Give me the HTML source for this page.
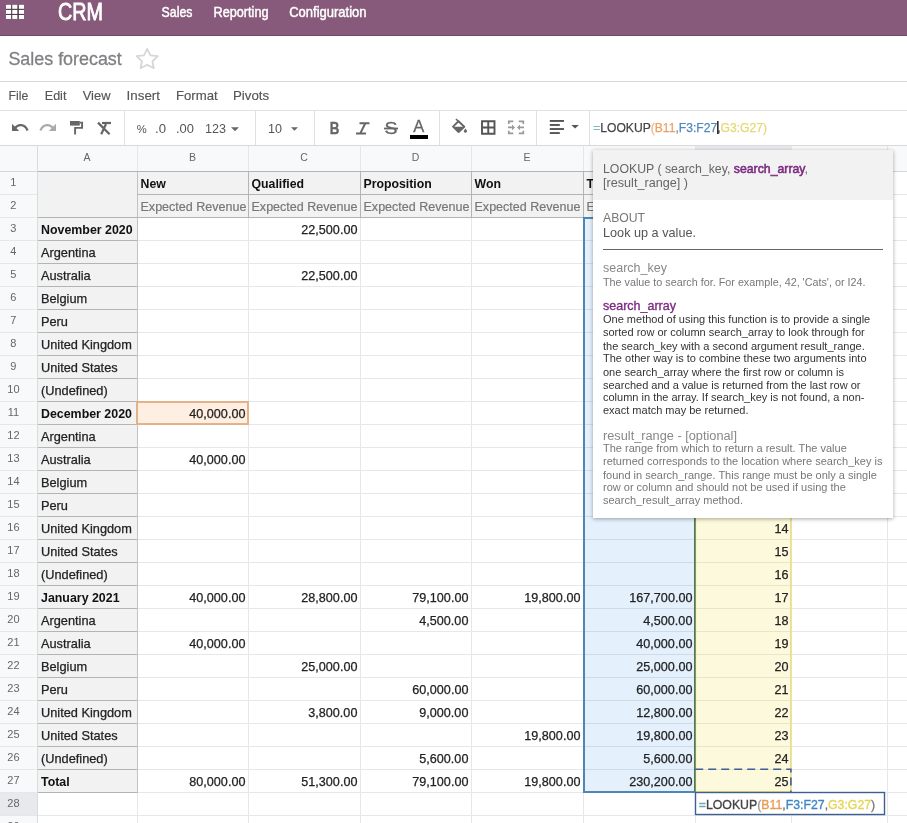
<!DOCTYPE html>
<html><head><meta charset="utf-8"><style>
html,body{margin:0;padding:0;background:#fff;}
body{width:907px;height:823px;overflow:hidden;position:relative;font-family:"Liberation Sans", sans-serif;}
svg{position:absolute;left:0;top:0;font-family:"Liberation Sans", sans-serif;will-change:transform;}
</style></head><body>
<svg width="907" height="823" viewBox="0 0 907 823">
<rect x="0" y="0" width="907" height="35" fill="#875A7B" />
<rect x="0" y="35" width="907" height="1" fill="#6f4a66" />
<rect x="6" y="4.8" width="18" height="14.1" fill="#4b3446" />
<rect x="6" y="4.8" width="5.15" height="4.0" fill="#ffffff" />
<rect x="12.25" y="4.8" width="5.15" height="4.0" fill="#ffffff" />
<rect x="18.85" y="4.8" width="5.15" height="4.0" fill="#ffffff" />
<rect x="6" y="9.9" width="5.15" height="4.0" fill="#ffffff" />
<rect x="12.25" y="9.9" width="5.15" height="4.0" fill="#ffffff" />
<rect x="18.85" y="9.9" width="5.15" height="4.0" fill="#ffffff" />
<rect x="6" y="14.95" width="5.15" height="4.0" fill="#ffffff" />
<rect x="12.25" y="14.95" width="5.15" height="4.0" fill="#ffffff" />
<rect x="18.85" y="14.95" width="5.15" height="4.0" fill="#ffffff" />
<text x="57.9" y="20.2" font-size="23.5" fill="#fff" font-weight="normal" text-anchor="start" textLength="45" lengthAdjust="spacingAndGlyphs" stroke="#fff" stroke-width="0.8">CRM</text>
<text x="161.6" y="17.2" font-size="14.2" fill="#fff" font-weight="normal" text-anchor="start" textLength="30.8" lengthAdjust="spacingAndGlyphs" stroke="#fff" stroke-width="0.45">Sales</text>
<text x="213.6" y="17.2" font-size="14.2" fill="#fff" font-weight="normal" text-anchor="start" textLength="54.9" lengthAdjust="spacingAndGlyphs" stroke="#fff" stroke-width="0.45">Reporting</text>
<text x="289.2" y="17.2" font-size="14.2" fill="#fff" font-weight="normal" text-anchor="start" textLength="77.4" lengthAdjust="spacingAndGlyphs" stroke="#fff" stroke-width="0.45">Configuration</text>
<text x="8.4" y="64.7" font-size="18.5" fill="#808084" font-weight="normal" text-anchor="start" textLength="113.4" lengthAdjust="spacingAndGlyphs"  stroke="#808084" stroke-width="0.3">Sales forecast</text>
<path d="M147.2 48.8 L150.4 55.4 L157.8 56.2 L152.4 61.3 L153.8 68.2 L147.2 64.7 L140.6 68.2 L142 61.3 L136.6 56.2 L144 55.4 Z" fill="none" stroke="#d6d6d6" stroke-width="1.8" stroke-linejoin="round"/>
<rect x="0" y="81" width="907" height="1" fill="#d8d8d8" />
<text x="8.6" y="100" font-size="12.8" fill="#555" font-weight="normal" text-anchor="start" textLength="19.8" lengthAdjust="spacingAndGlyphs"  stroke="#555" stroke-width="0.15">File</text>
<text x="44.8" y="100" font-size="12.8" fill="#555" font-weight="normal" text-anchor="start" textLength="21.6" lengthAdjust="spacingAndGlyphs"  stroke="#555" stroke-width="0.15">Edit</text>
<text x="82.7" y="100" font-size="12.8" fill="#555" font-weight="normal" text-anchor="start" textLength="27.8" lengthAdjust="spacingAndGlyphs"  stroke="#555" stroke-width="0.15">View</text>
<text x="126.6" y="100" font-size="12.8" fill="#555" font-weight="normal" text-anchor="start" textLength="33.4" lengthAdjust="spacingAndGlyphs"  stroke="#555" stroke-width="0.15">Insert</text>
<text x="176" y="100" font-size="12.8" fill="#555" font-weight="normal" text-anchor="start" textLength="41.7" lengthAdjust="spacingAndGlyphs"  stroke="#555" stroke-width="0.15">Format</text>
<text x="233" y="100" font-size="12.8" fill="#555" font-weight="normal" text-anchor="start" textLength="36.2" lengthAdjust="spacingAndGlyphs"  stroke="#555" stroke-width="0.15">Pivots</text>
<rect x="0" y="110" width="907" height="1" fill="#e0e0e0" />
<path d="M14.5 129.2 C17.5 123.8 24.5 123.6 27.6 130.4" fill="none" stroke="#666" stroke-width="2.3"/>
<path d="M12 123.8 L12 130.9 L19.2 130.9 Z" fill="#666"/>
<path d="M53.5 129.2 C50.5 123.8 43.5 123.6 40.4 130.4" fill="none" stroke="#aaa" stroke-width="2.3"/>
<path d="M56 123.8 L56 130.9 L48.8 130.9 Z" fill="#aaa"/>
<path d="M70 121 h9.8 v4.6 h-9.8 z" fill="#666"/>
<path d="M79.8 122.6 h2.3 v5.3 h-7 v6.6" fill="none" stroke="#666" stroke-width="1.9"/>
<path d="M102 123 h9" stroke="#666" stroke-width="2.2" fill="none"/>
<path d="M106 124 L101.2 134.2 M98 122.6 L109.6 134.2" stroke="#666" stroke-width="2.2" fill="none"/>
<rect x="124" y="111" width="1" height="34" fill="#e0e0e0" />
<text x="136.8" y="132.8" font-size="11.2" fill="#555" font-weight="normal" text-anchor="start" >%</text>
<text x="155" y="132.9" font-size="12.5" fill="#555" font-weight="normal" text-anchor="start" textLength="11" lengthAdjust="spacingAndGlyphs" >.0</text>
<text x="176" y="132.9" font-size="12.5" fill="#555" font-weight="normal" text-anchor="start" textLength="18" lengthAdjust="spacingAndGlyphs" >.00</text>
<text x="205" y="132.6" font-size="12.8" fill="#555" font-weight="normal" text-anchor="start" textLength="21" lengthAdjust="spacingAndGlyphs" >123</text>
<path d="M231 127.3 h8 l-4 4 z" fill="#666"/>
<rect x="255" y="111" width="1" height="34" fill="#e0e0e0" />
<text x="268" y="132.6" font-size="12.8" fill="#555" font-weight="normal" text-anchor="start" textLength="14" lengthAdjust="spacingAndGlyphs" >10</text>
<path d="M291 127.3 h7 l-3.5 3.5 z" fill="#666"/>
<rect x="314" y="111" width="1" height="34" fill="#e0e0e0" />
<text x="329.8" y="134" font-size="16.5" fill="#666" font-weight="bold" text-anchor="start" textLength="9.6" lengthAdjust="spacingAndGlyphs"  stroke="#666" stroke-width="0.4">B</text>
<path d="M359.5 123.2 h10 M356 133.4 h10 M365.3 123.2 L360.3 133.4" stroke="#666" stroke-width="2" fill="none"/>
<text x="384.5" y="134.2" font-size="16.5" fill="#666" font-weight="normal" text-anchor="start" textLength="13" lengthAdjust="spacingAndGlyphs" stroke="#666" stroke-width="0.3">S</text>
<rect x="384" y="127.6" width="14" height="1.8" fill="#666" />
<text x="413.2" y="131.6" font-size="16.5" fill="#666" font-weight="normal" text-anchor="start" textLength="11" lengthAdjust="spacingAndGlyphs" stroke="#666" stroke-width="0.3">A</text>
<rect x="410" y="135" width="18" height="4" fill="#000" />
<rect x="439" y="111" width="1" height="34" fill="#e0e0e0" />
<path d="M458.5 121.3 L464.3 126.8 L458.6 132 L453 126.6 Z" fill="none" stroke="#666" stroke-width="1.9" stroke-linejoin="round"/>
<path d="M453.5 126.8 L464 126.8 L458.6 131.8 Z" fill="#666"/>
<path d="M456 119 L459 122" stroke="#666" stroke-width="1.6"/>
<path d="M465.4 128.6 L466.8 130.6 A1.5 1.5 0 1 1 464 130.6 Z" fill="#666"/>
<path d="M482 121.2 h12.5 v12.5 h-12.5 z M488.25 121.2 v12.5 M482 127.45 h12.5" fill="none" stroke="#555" stroke-width="1.9"/>
<path d="M508.8 124 v-2.6 h4.5 M518.8 121.4 h4.5 v2.6 M508.8 130.8 v2.6 h4.5 M518.8 133.4 h4.5 v-2.6" fill="none" stroke="#999" stroke-width="1.7"/>
<path d="M508 127.4 h5 M524 127.4 h-5" fill="none" stroke="#999" stroke-width="1.7"/>
<path d="M512 124.6 l3 2.8 l-3 2.8 z M520 124.6 l-3 2.8 l3 2.8 z" fill="#999"/>
<rect x="536" y="111" width="1" height="34" fill="#e0e0e0" />
<rect x="549.8" y="120.0" width="14.2" height="1.9" fill="#555" />
<rect x="549.8" y="124.03" width="10" height="1.9" fill="#555" />
<rect x="549.8" y="128.06" width="14.2" height="1.9" fill="#555" />
<rect x="549.8" y="132.09" width="10" height="1.9" fill="#555" />
<path d="M571.4 125 h7.4 l-3.7 3.6 z" fill="#555"/>
<rect x="589" y="111" width="1" height="34" fill="#e0e0e0" />
<text x="593.2" y="131.9" font-size="13.6" textLength="173.8" lengthAdjust="spacingAndGlyphs"><tspan fill="#7fb6c4" stroke="#7fb6c4" stroke-width="0.25">=</tspan><tspan fill="#444" stroke="#444" stroke-width="0.25">LOOKUP</tspan><tspan fill="#ecb58a" stroke="#ecb58a" stroke-width="0.25">(</tspan><tspan fill="#e9a066" stroke="#e9a066" stroke-width="0.25">B11</tspan><tspan fill="#888" stroke="#888" stroke-width="0.25">,</tspan><tspan fill="#4f88bd" stroke="#4f88bd" stroke-width="0.25">F3:F27</tspan><tspan fill="#555" stroke="#555" stroke-width="0.25">,</tspan><tspan fill="#e6d873" stroke="#e6d873" stroke-width="0.25">G3:G27</tspan><tspan fill="#e6d873" stroke="#e6d873" stroke-width="0.25">)</tspan></text>
<rect x="717.2" y="121" width="1.3" height="13" fill="#000" />
<rect x="0" y="145" width="907" height="1" fill="#d9d9d9" />
<rect x="0" y="146" width="907" height="25" fill="#f8f9fa" />
<rect x="0" y="171" width="37" height="652" fill="#f8f9fa" />
<rect x="696" y="146" width="95" height="25" fill="#e7e9ed" />
<rect x="0" y="793" width="37" height="22" fill="#e7e9ed" />
<rect x="37" y="171" width="100" height="621" fill="#f2f2f2" />
<rect x="137" y="171" width="558" height="46" fill="#f2f2f2" />
<rect x="37" y="146" width="1" height="677" fill="#e6e7e7" />
<rect x="137" y="146" width="1" height="677" fill="#e6e7e7" />
<rect x="248" y="146" width="1" height="677" fill="#e6e7e7" />
<rect x="360" y="146" width="1" height="677" fill="#e6e7e7" />
<rect x="471" y="146" width="1" height="677" fill="#e6e7e7" />
<rect x="583" y="146" width="1" height="677" fill="#e6e7e7" />
<rect x="695" y="146" width="1" height="677" fill="#e6e7e7" />
<rect x="791" y="146" width="1" height="677" fill="#e6e7e7" />
<rect x="887" y="146" width="1" height="677" fill="#e6e7e7" />
<rect x="983" y="146" width="1" height="677" fill="#e6e7e7" />
<rect x="0" y="171" width="907" height="1" fill="#e6e7e7" />
<rect x="0" y="194" width="907" height="1" fill="#e6e7e7" />
<rect x="0" y="217" width="907" height="1" fill="#e6e7e7" />
<rect x="0" y="240" width="907" height="1" fill="#e6e7e7" />
<rect x="0" y="263" width="907" height="1" fill="#e6e7e7" />
<rect x="0" y="286" width="907" height="1" fill="#e6e7e7" />
<rect x="0" y="309" width="907" height="1" fill="#e6e7e7" />
<rect x="0" y="332" width="907" height="1" fill="#e6e7e7" />
<rect x="0" y="355" width="907" height="1" fill="#e6e7e7" />
<rect x="0" y="378" width="907" height="1" fill="#e6e7e7" />
<rect x="0" y="401" width="907" height="1" fill="#e6e7e7" />
<rect x="0" y="424" width="907" height="1" fill="#e6e7e7" />
<rect x="0" y="447" width="907" height="1" fill="#e6e7e7" />
<rect x="0" y="470" width="907" height="1" fill="#e6e7e7" />
<rect x="0" y="493" width="907" height="1" fill="#e6e7e7" />
<rect x="0" y="516" width="907" height="1" fill="#e6e7e7" />
<rect x="0" y="539" width="907" height="1" fill="#e6e7e7" />
<rect x="0" y="562" width="907" height="1" fill="#e6e7e7" />
<rect x="0" y="585" width="907" height="1" fill="#e6e7e7" />
<rect x="0" y="608" width="907" height="1" fill="#e6e7e7" />
<rect x="0" y="631" width="907" height="1" fill="#e6e7e7" />
<rect x="0" y="654" width="907" height="1" fill="#e6e7e7" />
<rect x="0" y="677" width="907" height="1" fill="#e6e7e7" />
<rect x="0" y="700" width="907" height="1" fill="#e6e7e7" />
<rect x="0" y="723" width="907" height="1" fill="#e6e7e7" />
<rect x="0" y="746" width="907" height="1" fill="#e6e7e7" />
<rect x="0" y="769" width="907" height="1" fill="#e6e7e7" />
<rect x="0" y="792" width="907" height="1" fill="#e6e7e7" />
<rect x="0" y="815" width="907" height="1" fill="#e6e7e7" />
<rect x="0" y="171" width="907" height="1" fill="#d6d6d6" />
<rect x="37" y="146" width="1" height="677" fill="#d9dbdc" />
<rect x="137" y="171" width="1" height="622" fill="#c2c2c2" />
<rect x="37" y="217" width="100" height="1" fill="#b4b4b4" />
<rect x="37" y="240" width="100" height="1" fill="#b4b4b4" />
<rect x="37" y="263" width="100" height="1" fill="#b4b4b4" />
<rect x="37" y="286" width="100" height="1" fill="#b4b4b4" />
<rect x="37" y="309" width="100" height="1" fill="#b4b4b4" />
<rect x="37" y="332" width="100" height="1" fill="#b4b4b4" />
<rect x="37" y="355" width="100" height="1" fill="#b4b4b4" />
<rect x="37" y="378" width="100" height="1" fill="#b4b4b4" />
<rect x="37" y="401" width="100" height="1" fill="#b4b4b4" />
<rect x="37" y="424" width="100" height="1" fill="#b4b4b4" />
<rect x="37" y="447" width="100" height="1" fill="#b4b4b4" />
<rect x="37" y="470" width="100" height="1" fill="#b4b4b4" />
<rect x="37" y="493" width="100" height="1" fill="#b4b4b4" />
<rect x="37" y="516" width="100" height="1" fill="#b4b4b4" />
<rect x="37" y="539" width="100" height="1" fill="#b4b4b4" />
<rect x="37" y="562" width="100" height="1" fill="#b4b4b4" />
<rect x="37" y="585" width="100" height="1" fill="#b4b4b4" />
<rect x="37" y="608" width="100" height="1" fill="#b4b4b4" />
<rect x="37" y="631" width="100" height="1" fill="#b4b4b4" />
<rect x="37" y="654" width="100" height="1" fill="#b4b4b4" />
<rect x="37" y="677" width="100" height="1" fill="#b4b4b4" />
<rect x="37" y="700" width="100" height="1" fill="#b4b4b4" />
<rect x="37" y="723" width="100" height="1" fill="#b4b4b4" />
<rect x="37" y="746" width="100" height="1" fill="#b4b4b4" />
<rect x="37" y="769" width="100" height="1" fill="#b4b4b4" />
<rect x="37" y="792" width="100" height="1" fill="#b4b4b4" />
<rect x="37" y="171" width="658" height="1" fill="#b4b4b4" />
<rect x="248" y="171" width="1" height="46" fill="#b4b4b4" />
<rect x="360" y="171" width="1" height="46" fill="#b4b4b4" />
<rect x="471" y="171" width="1" height="46" fill="#b4b4b4" />
<rect x="583" y="171" width="1" height="46" fill="#b4b4b4" />
<rect x="695" y="171" width="1" height="46" fill="#b4b4b4" />
<rect x="137" y="194" width="558" height="1" fill="#b4b4b4" />
<rect x="137" y="217" width="558" height="1" fill="#b4b4b4" />
<rect x="38" y="194" width="99" height="1" fill="#f2f2f2" />
<rect x="37" y="171" width="1" height="622" fill="#d9dbdc" />
<rect x="583" y="217" width="112" height="575" fill="rgb(40,135,235)" fill-opacity="0.125"/>
<rect x="695" y="217" width="96" height="575" fill="rgb(240,215,40)" fill-opacity="0.16"/>
<rect x="137" y="401" width="111" height="23" fill="rgb(245,150,60)" fill-opacity="0.15"/>
<text x="140.5" y="187.8" font-size="12.3" fill="#111" font-weight="bold" text-anchor="start" >New</text>
<text x="251.5" y="187.8" font-size="12.3" fill="#111" font-weight="bold" text-anchor="start" >Qualified</text>
<text x="363.5" y="187.8" font-size="12.3" fill="#111" font-weight="bold" text-anchor="start" >Proposition</text>
<text x="474.5" y="187.8" font-size="12.3" fill="#111" font-weight="bold" text-anchor="start" >Won</text>
<text x="586.5" y="187.8" font-size="12.3" fill="#111" font-weight="bold" text-anchor="start" >Total</text>
<text x="140.5" y="210.8" font-size="12.5" fill="#777" font-weight="normal" text-anchor="start" textLength="106" lengthAdjust="spacingAndGlyphs"  stroke="#777" stroke-width="0.2">Expected Revenue</text>
<text x="251.5" y="210.8" font-size="12.5" fill="#777" font-weight="normal" text-anchor="start" textLength="106" lengthAdjust="spacingAndGlyphs"  stroke="#777" stroke-width="0.2">Expected Revenue</text>
<text x="363.5" y="210.8" font-size="12.5" fill="#777" font-weight="normal" text-anchor="start" textLength="106" lengthAdjust="spacingAndGlyphs"  stroke="#777" stroke-width="0.2">Expected Revenue</text>
<text x="474.5" y="210.8" font-size="12.5" fill="#777" font-weight="normal" text-anchor="start" textLength="106" lengthAdjust="spacingAndGlyphs"  stroke="#777" stroke-width="0.2">Expected Revenue</text>
<text x="586.5" y="210.8" font-size="12.5" fill="#777" font-weight="normal" text-anchor="start" textLength="106" lengthAdjust="spacingAndGlyphs"  stroke="#777" stroke-width="0.2">Expected Revenue</text>
<text x="41" y="233.8" font-size="12.4" fill="#111" font-weight="bold" text-anchor="start" >November 2020</text>
<text x="41" y="256.8" font-size="12.78" fill="#222" font-weight="normal" text-anchor="start"  stroke="#222" stroke-width="0.25">Argentina</text>
<text x="41" y="279.8" font-size="12.78" fill="#222" font-weight="normal" text-anchor="start"  stroke="#222" stroke-width="0.25">Australia</text>
<text x="41" y="302.8" font-size="12.78" fill="#222" font-weight="normal" text-anchor="start"  stroke="#222" stroke-width="0.25">Belgium</text>
<text x="41" y="325.8" font-size="12.78" fill="#222" font-weight="normal" text-anchor="start"  stroke="#222" stroke-width="0.25">Peru</text>
<text x="41" y="348.8" font-size="12.78" fill="#222" font-weight="normal" text-anchor="start"  stroke="#222" stroke-width="0.25">United Kingdom</text>
<text x="41" y="371.8" font-size="12.78" fill="#222" font-weight="normal" text-anchor="start"  stroke="#222" stroke-width="0.25">United States</text>
<text x="41" y="394.8" font-size="12.78" fill="#222" font-weight="normal" text-anchor="start"  stroke="#222" stroke-width="0.25">(Undefined)</text>
<text x="41" y="417.8" font-size="12.4" fill="#111" font-weight="bold" text-anchor="start" >December 2020</text>
<text x="41" y="440.8" font-size="12.78" fill="#222" font-weight="normal" text-anchor="start"  stroke="#222" stroke-width="0.25">Argentina</text>
<text x="41" y="463.8" font-size="12.78" fill="#222" font-weight="normal" text-anchor="start"  stroke="#222" stroke-width="0.25">Australia</text>
<text x="41" y="486.8" font-size="12.78" fill="#222" font-weight="normal" text-anchor="start"  stroke="#222" stroke-width="0.25">Belgium</text>
<text x="41" y="509.8" font-size="12.78" fill="#222" font-weight="normal" text-anchor="start"  stroke="#222" stroke-width="0.25">Peru</text>
<text x="41" y="532.8" font-size="12.78" fill="#222" font-weight="normal" text-anchor="start"  stroke="#222" stroke-width="0.25">United Kingdom</text>
<text x="41" y="555.8" font-size="12.78" fill="#222" font-weight="normal" text-anchor="start"  stroke="#222" stroke-width="0.25">United States</text>
<text x="41" y="578.8" font-size="12.78" fill="#222" font-weight="normal" text-anchor="start"  stroke="#222" stroke-width="0.25">(Undefined)</text>
<text x="41" y="601.8" font-size="12.4" fill="#111" font-weight="bold" text-anchor="start" >January 2021</text>
<text x="41" y="624.8" font-size="12.78" fill="#222" font-weight="normal" text-anchor="start"  stroke="#222" stroke-width="0.25">Argentina</text>
<text x="41" y="647.8" font-size="12.78" fill="#222" font-weight="normal" text-anchor="start"  stroke="#222" stroke-width="0.25">Australia</text>
<text x="41" y="670.8" font-size="12.78" fill="#222" font-weight="normal" text-anchor="start"  stroke="#222" stroke-width="0.25">Belgium</text>
<text x="41" y="693.8" font-size="12.78" fill="#222" font-weight="normal" text-anchor="start"  stroke="#222" stroke-width="0.25">Peru</text>
<text x="41" y="716.8" font-size="12.78" fill="#222" font-weight="normal" text-anchor="start"  stroke="#222" stroke-width="0.25">United Kingdom</text>
<text x="41" y="739.8" font-size="12.78" fill="#222" font-weight="normal" text-anchor="start"  stroke="#222" stroke-width="0.25">United States</text>
<text x="41" y="762.8" font-size="12.78" fill="#222" font-weight="normal" text-anchor="start"  stroke="#222" stroke-width="0.25">(Undefined)</text>
<text x="41" y="785.8" font-size="12.4" fill="#111" font-weight="bold" text-anchor="start" >Total</text>
<text x="357.4" y="233.8" font-size="12.6" fill="#222" font-weight="normal" text-anchor="end"  stroke="#222" stroke-width="0.25">22,500.00</text>
<text x="357.4" y="279.8" font-size="12.6" fill="#222" font-weight="normal" text-anchor="end"  stroke="#222" stroke-width="0.25">22,500.00</text>
<text x="245.4" y="417.8" font-size="12.6" fill="#222" font-weight="normal" text-anchor="end"  stroke="#222" stroke-width="0.25">40,000.00</text>
<text x="245.4" y="463.8" font-size="12.6" fill="#222" font-weight="normal" text-anchor="end"  stroke="#222" stroke-width="0.25">40,000.00</text>
<text x="245.4" y="601.8" font-size="12.6" fill="#222" font-weight="normal" text-anchor="end"  stroke="#222" stroke-width="0.25">40,000.00</text>
<text x="357.4" y="601.8" font-size="12.6" fill="#222" font-weight="normal" text-anchor="end"  stroke="#222" stroke-width="0.25">28,800.00</text>
<text x="468.4" y="601.8" font-size="12.6" fill="#222" font-weight="normal" text-anchor="end"  stroke="#222" stroke-width="0.25">79,100.00</text>
<text x="580.4" y="601.8" font-size="12.6" fill="#222" font-weight="normal" text-anchor="end"  stroke="#222" stroke-width="0.25">19,800.00</text>
<text x="692.4" y="601.8" font-size="12.6" fill="#222" font-weight="normal" text-anchor="end"  stroke="#222" stroke-width="0.25">167,700.00</text>
<text x="468.4" y="624.8" font-size="12.6" fill="#222" font-weight="normal" text-anchor="end"  stroke="#222" stroke-width="0.25">4,500.00</text>
<text x="692.4" y="624.8" font-size="12.6" fill="#222" font-weight="normal" text-anchor="end"  stroke="#222" stroke-width="0.25">4,500.00</text>
<text x="245.4" y="647.8" font-size="12.6" fill="#222" font-weight="normal" text-anchor="end"  stroke="#222" stroke-width="0.25">40,000.00</text>
<text x="692.4" y="647.8" font-size="12.6" fill="#222" font-weight="normal" text-anchor="end"  stroke="#222" stroke-width="0.25">40,000.00</text>
<text x="357.4" y="670.8" font-size="12.6" fill="#222" font-weight="normal" text-anchor="end"  stroke="#222" stroke-width="0.25">25,000.00</text>
<text x="692.4" y="670.8" font-size="12.6" fill="#222" font-weight="normal" text-anchor="end"  stroke="#222" stroke-width="0.25">25,000.00</text>
<text x="468.4" y="693.8" font-size="12.6" fill="#222" font-weight="normal" text-anchor="end"  stroke="#222" stroke-width="0.25">60,000.00</text>
<text x="692.4" y="693.8" font-size="12.6" fill="#222" font-weight="normal" text-anchor="end"  stroke="#222" stroke-width="0.25">60,000.00</text>
<text x="357.4" y="716.8" font-size="12.6" fill="#222" font-weight="normal" text-anchor="end"  stroke="#222" stroke-width="0.25">3,800.00</text>
<text x="468.4" y="716.8" font-size="12.6" fill="#222" font-weight="normal" text-anchor="end"  stroke="#222" stroke-width="0.25">9,000.00</text>
<text x="692.4" y="716.8" font-size="12.6" fill="#222" font-weight="normal" text-anchor="end"  stroke="#222" stroke-width="0.25">12,800.00</text>
<text x="580.4" y="739.8" font-size="12.6" fill="#222" font-weight="normal" text-anchor="end"  stroke="#222" stroke-width="0.25">19,800.00</text>
<text x="692.4" y="739.8" font-size="12.6" fill="#222" font-weight="normal" text-anchor="end"  stroke="#222" stroke-width="0.25">19,800.00</text>
<text x="468.4" y="762.8" font-size="12.6" fill="#222" font-weight="normal" text-anchor="end"  stroke="#222" stroke-width="0.25">5,600.00</text>
<text x="692.4" y="762.8" font-size="12.6" fill="#222" font-weight="normal" text-anchor="end"  stroke="#222" stroke-width="0.25">5,600.00</text>
<text x="245.4" y="785.8" font-size="12.6" fill="#222" font-weight="normal" text-anchor="end"  stroke="#222" stroke-width="0.25">80,000.00</text>
<text x="357.4" y="785.8" font-size="12.6" fill="#222" font-weight="normal" text-anchor="end"  stroke="#222" stroke-width="0.25">51,300.00</text>
<text x="468.4" y="785.8" font-size="12.6" fill="#222" font-weight="normal" text-anchor="end"  stroke="#222" stroke-width="0.25">79,100.00</text>
<text x="580.4" y="785.8" font-size="12.6" fill="#222" font-weight="normal" text-anchor="end"  stroke="#222" stroke-width="0.25">19,800.00</text>
<text x="692.4" y="785.8" font-size="12.6" fill="#222" font-weight="normal" text-anchor="end"  stroke="#222" stroke-width="0.25">230,200.00</text>
<text x="788.4" y="233.8" font-size="12.6" fill="#222" font-weight="normal" text-anchor="end"  stroke="#222" stroke-width="0.25">1</text>
<text x="788.4" y="256.8" font-size="12.6" fill="#222" font-weight="normal" text-anchor="end"  stroke="#222" stroke-width="0.25">2</text>
<text x="788.4" y="279.8" font-size="12.6" fill="#222" font-weight="normal" text-anchor="end"  stroke="#222" stroke-width="0.25">3</text>
<text x="788.4" y="302.8" font-size="12.6" fill="#222" font-weight="normal" text-anchor="end"  stroke="#222" stroke-width="0.25">4</text>
<text x="788.4" y="325.8" font-size="12.6" fill="#222" font-weight="normal" text-anchor="end"  stroke="#222" stroke-width="0.25">5</text>
<text x="788.4" y="348.8" font-size="12.6" fill="#222" font-weight="normal" text-anchor="end"  stroke="#222" stroke-width="0.25">6</text>
<text x="788.4" y="371.8" font-size="12.6" fill="#222" font-weight="normal" text-anchor="end"  stroke="#222" stroke-width="0.25">7</text>
<text x="788.4" y="394.8" font-size="12.6" fill="#222" font-weight="normal" text-anchor="end"  stroke="#222" stroke-width="0.25">8</text>
<text x="788.4" y="417.8" font-size="12.6" fill="#222" font-weight="normal" text-anchor="end"  stroke="#222" stroke-width="0.25">9</text>
<text x="788.4" y="440.8" font-size="12.6" fill="#222" font-weight="normal" text-anchor="end"  stroke="#222" stroke-width="0.25">10</text>
<text x="788.4" y="463.8" font-size="12.6" fill="#222" font-weight="normal" text-anchor="end"  stroke="#222" stroke-width="0.25">11</text>
<text x="788.4" y="486.8" font-size="12.6" fill="#222" font-weight="normal" text-anchor="end"  stroke="#222" stroke-width="0.25">12</text>
<text x="788.4" y="509.8" font-size="12.6" fill="#222" font-weight="normal" text-anchor="end"  stroke="#222" stroke-width="0.25">13</text>
<text x="788.4" y="532.8" font-size="12.6" fill="#222" font-weight="normal" text-anchor="end"  stroke="#222" stroke-width="0.25">14</text>
<text x="788.4" y="555.8" font-size="12.6" fill="#222" font-weight="normal" text-anchor="end"  stroke="#222" stroke-width="0.25">15</text>
<text x="788.4" y="578.8" font-size="12.6" fill="#222" font-weight="normal" text-anchor="end"  stroke="#222" stroke-width="0.25">16</text>
<text x="788.4" y="601.8" font-size="12.6" fill="#222" font-weight="normal" text-anchor="end"  stroke="#222" stroke-width="0.25">17</text>
<text x="788.4" y="624.8" font-size="12.6" fill="#222" font-weight="normal" text-anchor="end"  stroke="#222" stroke-width="0.25">18</text>
<text x="788.4" y="647.8" font-size="12.6" fill="#222" font-weight="normal" text-anchor="end"  stroke="#222" stroke-width="0.25">19</text>
<text x="788.4" y="670.8" font-size="12.6" fill="#222" font-weight="normal" text-anchor="end"  stroke="#222" stroke-width="0.25">20</text>
<text x="788.4" y="693.8" font-size="12.6" fill="#222" font-weight="normal" text-anchor="end"  stroke="#222" stroke-width="0.25">21</text>
<text x="788.4" y="716.8" font-size="12.6" fill="#222" font-weight="normal" text-anchor="end"  stroke="#222" stroke-width="0.25">22</text>
<text x="788.4" y="739.8" font-size="12.6" fill="#222" font-weight="normal" text-anchor="end"  stroke="#222" stroke-width="0.25">23</text>
<text x="788.4" y="762.8" font-size="12.6" fill="#222" font-weight="normal" text-anchor="end"  stroke="#222" stroke-width="0.25">24</text>
<text x="788.4" y="785.8" font-size="12.6" fill="#222" font-weight="normal" text-anchor="end"  stroke="#222" stroke-width="0.25">25</text>
<rect x="137" y="402" width="111" height="22" fill="none" stroke="#e4b084" stroke-width="1.9"/>
<rect x="584" y="218" width="111" height="574" fill="none" stroke="#4f86b8" stroke-width="2"/>
<rect x="695.5" y="217.8" width="95.3" height="574" fill="none" stroke="#eadd78" stroke-width="1.4"/>
<rect x="694.3" y="217" width="1.3" height="575" fill="#3d6b45" />
<path d="M695.2 769.3 H790.9 V792" fill="none" stroke="#3f5f96" stroke-width="1.6" stroke-dasharray="8,5"/>
<rect x="695" y="792" width="190" height="23" fill="#ffffff" />
<rect x="695.5" y="792.5" width="189" height="22" fill="none" stroke="#3d5f92" stroke-width="1.4"/>
<text x="698.8" y="809" font-size="13.4" textLength="176.4" lengthAdjust="spacingAndGlyphs"><tspan fill="#6fa9b8" stroke="#6fa9b8" stroke-width="0.35">=</tspan><tspan fill="#444" stroke="#444" stroke-width="0.35">LOOKUP</tspan><tspan fill="#999" stroke="#999" stroke-width="0.35">(</tspan><tspan fill="#ea9a50" stroke="#ea9a50" stroke-width="0.35">B11</tspan><tspan fill="#777" stroke="#777" stroke-width="0.35">,</tspan><tspan fill="#3f86c4" stroke="#3f86c4" stroke-width="0.35">F3:F27</tspan><tspan fill="#777" stroke="#777" stroke-width="0.35">,</tspan><tspan fill="#e3d554" stroke="#e3d554" stroke-width="0.35">G3:G27</tspan><tspan fill="#777" stroke="#777" stroke-width="0.35">)</tspan></text>
<text x="87.0" y="160.8" font-size="10.5" fill="#666" font-weight="normal" text-anchor="middle" >A</text>
<text x="192.5" y="160.8" font-size="10.5" fill="#666" font-weight="normal" text-anchor="middle" >B</text>
<text x="304.0" y="160.8" font-size="10.5" fill="#666" font-weight="normal" text-anchor="middle" >C</text>
<text x="415.5" y="160.8" font-size="10.5" fill="#666" font-weight="normal" text-anchor="middle" >D</text>
<text x="527.0" y="160.8" font-size="10.5" fill="#666" font-weight="normal" text-anchor="middle" >E</text>
<text x="639.0" y="160.8" font-size="10.5" fill="#666" font-weight="normal" text-anchor="middle" >F</text>
<text x="743.0" y="160.8" font-size="10.5" fill="#666" font-weight="normal" text-anchor="middle" >G</text>
<text x="839.0" y="160.8" font-size="10.5" fill="#666" font-weight="normal" text-anchor="middle" >H</text>
<text x="935.0" y="160.8" font-size="10.5" fill="#666" font-weight="normal" text-anchor="middle" >I</text>
<text x="13.4" y="186" font-size="11" fill="#666" font-weight="normal" text-anchor="middle" >1</text>
<text x="13.4" y="209" font-size="11" fill="#666" font-weight="normal" text-anchor="middle" >2</text>
<text x="13.4" y="232" font-size="11" fill="#666" font-weight="normal" text-anchor="middle" >3</text>
<text x="13.4" y="255" font-size="11" fill="#666" font-weight="normal" text-anchor="middle" >4</text>
<text x="13.4" y="278" font-size="11" fill="#666" font-weight="normal" text-anchor="middle" >5</text>
<text x="13.4" y="301" font-size="11" fill="#666" font-weight="normal" text-anchor="middle" >6</text>
<text x="13.4" y="324" font-size="11" fill="#666" font-weight="normal" text-anchor="middle" >7</text>
<text x="13.4" y="347" font-size="11" fill="#666" font-weight="normal" text-anchor="middle" >8</text>
<text x="13.4" y="370" font-size="11" fill="#666" font-weight="normal" text-anchor="middle" >9</text>
<text x="13.4" y="393" font-size="11" fill="#666" font-weight="normal" text-anchor="middle" >10</text>
<text x="13.4" y="416" font-size="11" fill="#666" font-weight="normal" text-anchor="middle" >11</text>
<text x="13.4" y="439" font-size="11" fill="#666" font-weight="normal" text-anchor="middle" >12</text>
<text x="13.4" y="462" font-size="11" fill="#666" font-weight="normal" text-anchor="middle" >13</text>
<text x="13.4" y="485" font-size="11" fill="#666" font-weight="normal" text-anchor="middle" >14</text>
<text x="13.4" y="508" font-size="11" fill="#666" font-weight="normal" text-anchor="middle" >15</text>
<text x="13.4" y="531" font-size="11" fill="#666" font-weight="normal" text-anchor="middle" >16</text>
<text x="13.4" y="554" font-size="11" fill="#666" font-weight="normal" text-anchor="middle" >17</text>
<text x="13.4" y="577" font-size="11" fill="#666" font-weight="normal" text-anchor="middle" >18</text>
<text x="13.4" y="600" font-size="11" fill="#666" font-weight="normal" text-anchor="middle" >19</text>
<text x="13.4" y="623" font-size="11" fill="#666" font-weight="normal" text-anchor="middle" >20</text>
<text x="13.4" y="646" font-size="11" fill="#666" font-weight="normal" text-anchor="middle" >21</text>
<text x="13.4" y="669" font-size="11" fill="#666" font-weight="normal" text-anchor="middle" >22</text>
<text x="13.4" y="692" font-size="11" fill="#666" font-weight="normal" text-anchor="middle" >23</text>
<text x="13.4" y="715" font-size="11" fill="#666" font-weight="normal" text-anchor="middle" >24</text>
<text x="13.4" y="738" font-size="11" fill="#666" font-weight="normal" text-anchor="middle" >25</text>
<text x="13.4" y="761" font-size="11" fill="#666" font-weight="normal" text-anchor="middle" >26</text>
<text x="13.4" y="784" font-size="11" fill="#666" font-weight="normal" text-anchor="middle" >27</text>
<text x="13.4" y="807" font-size="11" fill="#666" font-weight="normal" text-anchor="middle" >28</text>
<text x="13.4" y="830" font-size="11" fill="#666" font-weight="normal" text-anchor="middle" >29</text>
</svg>

<div id="pop" style="position:absolute;left:593px;top:150px;width:300px;height:368px;background:#fff;box-shadow:0 1px 4px rgba(0,0,0,0.35);overflow:hidden">
</div>
<svg width="907" height="823" viewBox="0 0 907 823" style="pointer-events:none">
<rect x="593" y="150" width="300" height="50" fill="#f2f2f2"/>
<text x="603" y="172.5" font-size="12.6" textLength="205" lengthAdjust="spacingAndGlyphs"><tspan fill="#666">LOOKUP ( search_key, </tspan><tspan fill="#7c2a80" stroke="#7c2a80" stroke-width="0.55">search_array</tspan><tspan fill="#666">,</tspan></text>
<text x="603" y="187" font-size="12.6" fill="#666" font-weight="normal" textLength="85" lengthAdjust="spacingAndGlyphs">[result_range] )</text>
<text x="603" y="222" font-size="12.3" fill="#777" font-weight="normal" textLength="42" lengthAdjust="spacingAndGlyphs">ABOUT</text>
<text x="603" y="236.7" font-size="13" fill="#555" font-weight="normal" textLength="93" lengthAdjust="spacingAndGlyphs">Look up a value.</text>
<rect x="603" y="249" width="280" height="1" fill="#666"/>
<text x="603" y="272.4" font-size="12.5" fill="#888" font-weight="normal" textLength="64" lengthAdjust="spacingAndGlyphs">search_key</text>
<text x="603" y="285.6" font-size="10.5" fill="#777" font-weight="normal" textLength="262.5" lengthAdjust="spacingAndGlyphs">The value to search for. For example, 42, 'Cats', or I24.</text>
<text x="603" y="309.9" font-size="12.6" fill="#7c2a80" stroke="#7c2a80" stroke-width="0.35" textLength="73" lengthAdjust="spacingAndGlyphs">search_array</text>
<text x="603" y="323.1" font-size="11" fill="#333" font-weight="normal">One method of using this function is to provide a single</text>
<text x="603" y="336.3" font-size="11" fill="#333" font-weight="normal">sorted row or column search_array to look through for</text>
<text x="603" y="349.6" font-size="11" fill="#333" font-weight="normal">the search_key with a second argument result_range.</text>
<text x="603" y="362.4" font-size="11" fill="#333" font-weight="normal">The other way is to combine these two arguments into</text>
<text x="603" y="375.5" font-size="11" fill="#333" font-weight="normal">one search_array where the first row or column is</text>
<text x="603" y="388.5" font-size="11" fill="#333" font-weight="normal">searched and a value is returned from the last row or</text>
<text x="603" y="401.3" font-size="11" fill="#333" font-weight="normal">column in the array. If search_key is not found, a non-</text>
<text x="603" y="414.3" font-size="11" fill="#333" font-weight="normal">exact match may be returned.</text>
<text x="603" y="439.6" font-size="12.5" fill="#888" font-weight="normal" textLength="134" lengthAdjust="spacingAndGlyphs">result_range - [optional]</text>
<text x="603" y="452.1" font-size="11" fill="#777" font-weight="normal">The range from which to return a result. The value</text>
<text x="603" y="465.4" font-size="11" fill="#777" font-weight="normal">returned corresponds to the location where search_key is</text>
<text x="603" y="478.6" font-size="11" fill="#777" font-weight="normal">found in search_range. This range must be only a single</text>
<text x="603" y="491.2" font-size="11" fill="#777" font-weight="normal">row or column and should not be used if using the</text>
<text x="603" y="504.3" font-size="11" fill="#777" font-weight="normal">search_result_array method.</text>
</svg>
</body></html>
